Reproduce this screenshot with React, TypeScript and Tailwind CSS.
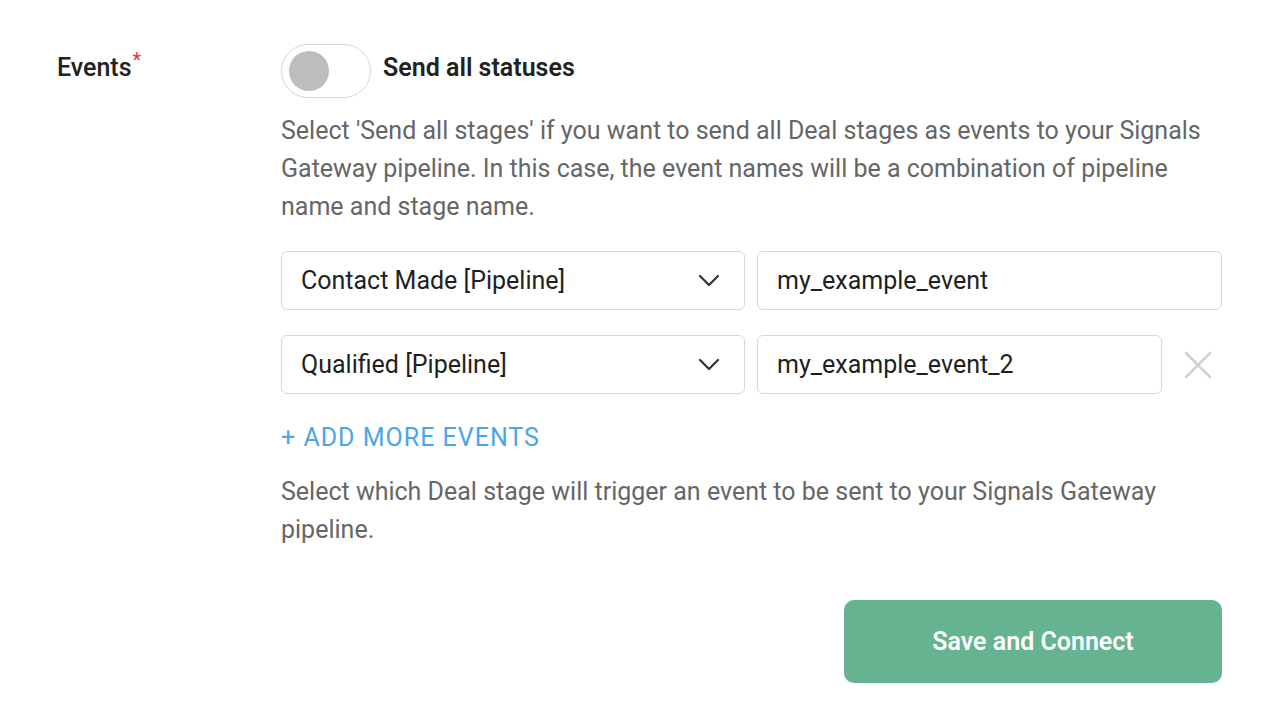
import React from "react";

function Chevron() {
  return (
    <svg width="22" height="13" viewBox="0 0 22 13" fill="none">
      <path d="M2 2l9 9 9-9" stroke="#333" strokeWidth="2.2" strokeLinecap="round" strokeLinejoin="round" />
    </svg>
  );
}

function CloseX() {
  return (
    <svg width="28" height="28" viewBox="0 0 28 28" fill="none">
      <path d="M2 2l24 24M26 2L2 26" stroke="#cdd2d6" strokeWidth="2.6" strokeLinecap="round" />
    </svg>
  );
}

function SelectBox({ label }: { label: string }) {
  return (
    <div className="w-[464px] h-[59px] shrink-0 flex items-center justify-between pl-[19px] pr-[24px] border border-[#d7d7d7] rounded-[6px] bg-white">
      <span className="text-[25px] text-[#1f1f1f]">{label}</span>
      <Chevron />
    </div>
  );
}

function InputBox({ value }: { value: string }) {
  return (
    <div className="flex-1 h-[59px] flex items-center pl-[19px] border border-[#d7d7d7] rounded-[6px] bg-white">
      <span className="text-[25px] text-[#1f1f1f]">{value}</span>
    </div>
  );
}

export default function App() {
  return (
    <div
      className="w-[1284px] h-[726px] bg-white pt-[44px] pl-[57px] pr-[62px]"
      style={{ fontFamily: "Roboto, 'Liberation Sans', sans-serif" }}
    >
      <div className="flex">
        <div className="w-[224px] shrink-0 h-[54px] flex items-center pb-[7px]">
          <span className="text-[25px] font-medium text-[#222]">Events</span>
          <span className="text-[20px] text-[#e0353f] self-start mt-[6px] ml-[1px] leading-none">*</span>
        </div>
        <div className="flex-1 flex flex-col">
          <div className="flex items-center gap-[12px]">
            <div className="w-[90px] h-[54px] rounded-full border border-[#d4d8db] bg-white flex items-center pl-[7px]">
              <div className="w-[40px] h-[40px] rounded-full bg-[#bdbdbd]" />
            </div>
            <span className="text-[25px] font-semibold text-[#222] pb-[7px]">Send all statuses</span>
          </div>
          <p className="mt-[14px] text-[25px] leading-[38px] text-[#666]">
            Select 'Send all stages' if you want to send all Deal stages as events to your Signals Gateway pipeline. In this case, the event names will be a combination of pipeline name and stage name.
          </p>
          <div className="mt-[25px] flex flex-col gap-[25px]">
            <div className="flex gap-[12px]">
              <SelectBox label="Contact Made [Pipeline]" />
              <InputBox value="my_example_event" />
            </div>
            <div className="flex gap-[12px]">
              <SelectBox label="Qualified [Pipeline]" />
              <InputBox value="my_example_event_2" />
              <div className="w-[48px] shrink-0 flex items-center justify-center">
                <CloseX />
              </div>
            </div>
          </div>
          <div className="mt-[25px] text-[25px] leading-[38px] tracking-[1px] text-[#4aa6ea]">+ ADD MORE EVENTS</div>
          <p className="mt-[16px] text-[25px] leading-[38px] text-[#666]">
            Select which Deal stage will trigger an event to be sent to your Signals Gateway pipeline.
          </p>
          <div className="mt-[51px] flex justify-end">
            <button className="w-[378px] h-[83px] rounded-[10px] bg-[#65b391] text-white text-[25px] font-semibold">
              Save and Connect
            </button>
          </div>
        </div>
      </div>
    </div>
  );
}
